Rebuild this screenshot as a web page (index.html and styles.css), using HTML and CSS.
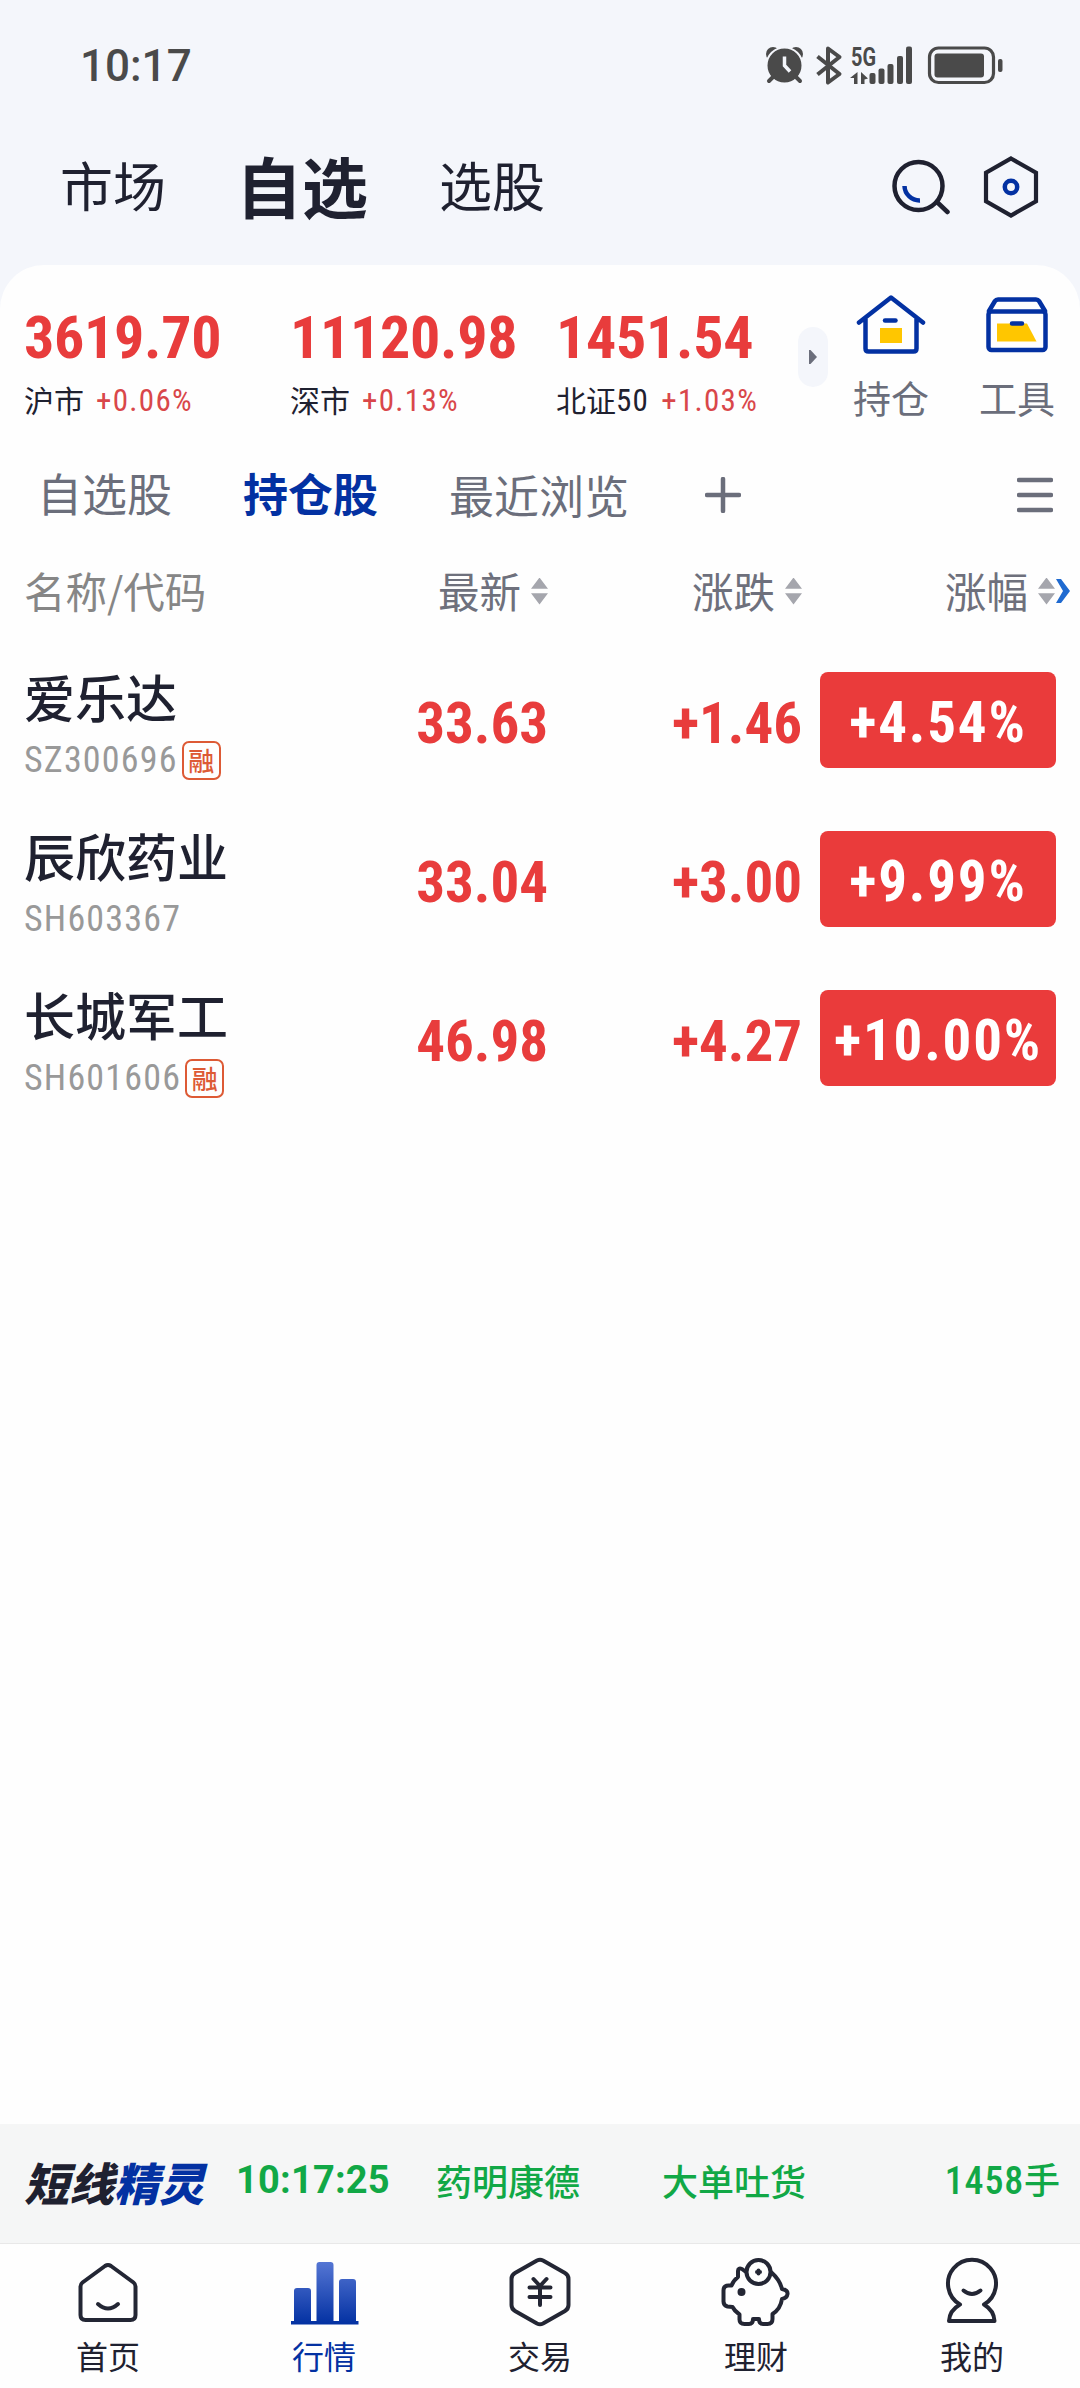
FILE: index.html
```html
<!DOCTYPE html>
<html lang="zh-CN">
<head>
    <meta charset="UTF-8">
    <meta name="viewport" content="width=device-width, initial-scale=1.0">
    <title>自选</title>
    <link rel="stylesheet" href="styles.css">
</head>
<body>
    <div class="status-bar">
        <span class="clock">10:17</span>
        <svg class="status-icons" width="240" height="48" viewBox="765 40 240 48">
            <!-- alarm -->
            <g stroke="#4a4a4a" fill="none" stroke-width="4" stroke-linecap="round">
                <circle cx="773" cy="53" r="7" fill="#4a4a4a" stroke="none"/>
                <circle cx="796" cy="53" r="7" fill="#4a4a4a" stroke="none"/>
                <circle cx="784.5" cy="64.500" r="18" fill="#4a4a4a" stroke="#f4f6fb" stroke-width="2"/>
                <path d="M773.500 75.500l-4.500 4.500M795.500 75.500l4.500 4.500"/>
                <path d="M784.5 55.500v9l5.500 6" stroke="#f4f6fb" stroke-width="3.500" stroke-linecap="butt"/>
            </g>
            <!-- bluetooth -->
            <path d="M817.500 55.500l22 17.500-11.500 8.500v-34l11.500 8.500-22 17.500" fill="none" stroke="#4a4a4a" stroke-width="4" stroke-linejoin="round"/>
            <!-- mobile data -->
            <text class="net" x="851" y="64.500" textLength="25" lengthAdjust="spacingAndGlyphs">5G</text>
            <g fill="#4a4a4a">
                <path d="M857.500 71v12h-3.500v-6h-4zM861 83v-12l7 6.500-3.500 1v4.500z"/>
                <rect x="869.500" y="72" width="6" height="11" rx="2"/>
                <rect x="878.500" y="67.500" width="6" height="15.500" rx="2"/>
                <rect x="887.500" y="63" width="6" height="20" rx="2"/>
                <rect x="897" y="55" width="6" height="28" rx="2"/>
                <rect x="906" y="45.500" width="6" height="37.500" rx="2"/>
                <rect x="934.500" y="52.500" width="49.500" height="24" rx="3"/>
                <rect x="998" y="58" width="4.500" height="13" rx="2"/>
            </g>
            <rect x="929.500" y="47" width="64" height="34.500" rx="9" fill="none" stroke="#4a4a4a" stroke-width="3.200"/>
        </svg>
    </div>

    <header class="header">
        <nav class="main-tabs">
            <a class="main-tab">市场</a>
            <a class="main-tab active">自选</a>
            <a class="main-tab">选股</a>
        </nav>
        <div class="header-icons">
            <svg width="60" height="64" viewBox="890 154 60 64" fill="none" stroke-width="4.500">
                <circle cx="918.500" cy="185" r="24" stroke="#1f2130"/>
                <path d="M937 201l10.500 10" stroke="#1f2130" stroke-linecap="round"/>
                <path d="M904.500 185a15 15 0 0 0 15.500 14.500" stroke="#0331a2"/>
            </svg>
            <svg width="56" height="64" viewBox="983 154 56 64" fill="none">
                <path d="M1011 157.500l25 14.200v28.600l-25 14.200-25-14.200v-28.600z" stroke="#1f2130" stroke-width="4.200"/>
                <circle cx="1011" cy="186" r="6.200" stroke="#0331a2" stroke-width="4.500"/>
            </svg>
        </div>
    </header>

    <main class="card">
        <section class="overview">
            <div class="indexes">
                <div class="index">
                    <div class="index-value num">3619.70</div>
                    <div class="index-label">沪市<span class="num">+0.06%</span></div>
                </div>
                <div class="index">
                    <div class="index-value num">11120.98</div>
                    <div class="index-label">深市<span class="num">+0.13%</span></div>
                </div>
                <div class="index">
                    <div class="index-value num">1451.54</div>
                    <div class="index-label">北证<b class="num">50</b><span class="num">+1.03%</span></div>
                </div>
            </div>
            <div class="more">
                <svg width="8" height="14" viewBox="0 0 8 14"><path d="M0 0h1.500L8 7 1.500 14H0z" fill="#6b6e7b"/></svg>
            </div>
            <a class="tool">
                <svg width="70" height="62" viewBox="856 293 70 62" fill="none" stroke="#0331a2" stroke-width="4.500" stroke-linecap="round" stroke-linejoin="round">
                    <path d="M859 321.500l32-25 32 25M865.500 318v29.500q0 3 3 3h45q3 0 3-3v-29.500"/>
                    <path d="M885 319.500h10.500"/>
                    <rect x="880" y="327" width="22" height="15" fill="#ffc600" stroke="none"/>
                </svg>
                <span>持仓</span>
            </a>
            <a class="tool">
                <svg width="70" height="62" viewBox="982 293 70 62" fill="none" stroke="#0331a2" stroke-width="4.500" stroke-linecap="round" stroke-linejoin="round">
                    <path d="M997 322.500h30l9.500 18h-39.500z" fill="#ffc600" stroke="none"/>
                    <rect x="988.500" y="310.500" width="57" height="38.500" rx="3"/>
                    <path d="M989 310l6-10q1-1.500 3-1.500h38q2 0 3 1.500l6 10M1012 322.500h10"/>
                </svg>
                <span>工具</span>
            </a>
        </section>

        <nav class="group-tabs">
            <a class="group-tab">自选股</a>
            <a class="group-tab active">持仓股</a>
            <a class="group-tab low">最近浏览</a>
            <svg class="add" width="36" height="36" viewBox="0 0 36 36"><path d="M18 2v32M2 18h32" stroke="#6b6e7b" stroke-width="4.500" stroke-linecap="round"/></svg>
            <svg class="menu" width="36" height="36" viewBox="0 0 36 36"><path d="M2 3h32M2 18h32M2 33h32" stroke="#6b6e7b" stroke-width="4.500" stroke-linecap="round"/></svg>
        </nav>

        <div class="row thead">
            <span class="col-name">名称/代码</span>
            <span class="col-price">最新<i class="sort"></i></span>
            <span class="col-change">涨跌<i class="sort"></i></span>
            <span class="col-pct">涨幅<i class="sort"></i><svg width="16" height="26" viewBox="0 0 16 26"><path d="M1 1h5l9 12-9 12h-5l7-12z" fill="#1f6ad0"/></svg></span>
        </div>

        <div class="row stock">
            <div class="col-name">
                <div class="name">爱乐达</div>
                <div class="code"><span class="num">SZ300696</span><span class="badge">融</span></div>
            </div>
            <span class="col-price num">33.63</span>
            <span class="col-change num">+1.46</span>
            <span class="pct"><span class="num">+4.54%</span></span>
        </div>
        <div class="row stock">
            <div class="col-name">
                <div class="name">辰欣药业</div>
                <div class="code"><span class="num">SH603367</span></div>
            </div>
            <span class="col-price num">33.04</span>
            <span class="col-change num">+3.00</span>
            <span class="pct"><span class="num">+9.99%</span></span>
        </div>
        <div class="row stock">
            <div class="col-name">
                <div class="name">长城军工</div>
                <div class="code"><span class="num">SH601606</span><span class="badge">融</span></div>
            </div>
            <span class="col-price num">46.98</span>
            <span class="col-change num">+4.27</span>
            <span class="pct"><span class="num">+10.00%</span></span>
        </div>
    </main>

    <div class="ticker">
        <span class="ticker-logo">短线<em>精灵</em></span>
        <span class="ticker-time num">10:17:25</span>
        <span class="ticker-stock">药明康德</span>
        <span class="ticker-event">大单吐货</span>
        <span class="ticker-amount"><span class="num">1458</span>手</span>
    </div>

    <nav class="tabbar">
        <a class="tabbar-item">
            <svg width="72" height="72" viewBox="73 2256 72 72">
                <path d="M106 2266q3-2 6 0l22.500 16.500q2 1.500 2 4v28.500q0 5-5 5h-45q-5 0-5-5v-28.500q0-2.500 2-4z"/>
                <path d="M99 2304q10 9 20 0"/>
            </svg>
            <span>首页</span>
        </a>
        <a class="tabbar-item active">
            <svg width="72" height="72" viewBox="288 2256 72 72">
                <defs>
                    <linearGradient id="bars" gradientUnits="userSpaceOnUse" x1="0" y1="2262" x2="0" y2="2324">
                        <stop offset="0" stop-color="#5576d4"/>
                        <stop offset="1" stop-color="#0331a2"/>
                    </linearGradient>
                </defs>
                <path class="solid" fill="url(#bars)" d="M294 2321v-30q0-3 3-3h11q3 0 3 3v30h5.500v-56q0-3 3-3h11q3 0 3 3v56h5.500v-39q0-3 3-3h11q3 0 3 3v39h2.500v3.500h-67.500v-3.500z"/>
            </svg>
            <span>行情</span>
        </a>
        <a class="tabbar-item">
            <svg width="72" height="72" viewBox="504 2256 72 72">
                <path d="M537 2260.500q3-1.500 6 0l22 12.500q3.500 2 3.500 6v26q0 4-3.500 6l-22 12.500q-3 1.500-6 0l-22-12.500q-3.500-2-3.500-6v-26q0-4 3.500-6z"/>
                <path d="M533.500 2279l6.500 7 6.500-7M540 2287v18M529.500 2287.500h21M529.500 2297h21"/>
            </svg>
            <span>交易</span>
        </a>
        <a class="tabbar-item">
            <svg width="72" height="72" viewBox="720 2256 72 72">
                <circle cx="758.500" cy="2272" r="12"/>
                <path d="M758.500 2270.500v3M757 2272h3"/>
                <circle cx="741.500" cy="2292" r="2" fill="#232634"/>
                <path d="M746 2272l-4-3q-4-1.500-4 2v6q-5 4-6.500 8.500h-3q-5 0-5 5v11q0 4 4 5l5 .5q2 4 7 7.500v5q0 4.500 5 4.500h4.500q4 0 4-5h6q0 5 4 5h4.500q5 0 5-5v-5q8-5 9.500-15 5-1 5.500-5t-5.500-5q-2-9-11-17"/>
            </svg>
            <span>理财</span>
        </a>
        <a class="tabbar-item">
            <svg width="72" height="72" viewBox="935 2256 72 72">
                <path d="M959 2304.500a24 24 0 1 1 24 0q10 6 10.500 16.500h-45.500q.5-10.500 11-16.500"/>
                <path d="M962.500 2290.500q8.500 7 17 0"/>
            </svg>
            <span>我的</span>
        </a>
    </nav>
</body>
</html>
```
FILE: styles.css
```css
* {
    box-sizing: border-box;
}
body {
    margin: 0;
    width: 1080px;
    height: 2388px;
    display: flex;
    flex-direction: column;
    overflow: hidden;
    background: #f4f6fb;
    color: #1f2130;
    font-family: "Noto Sans CJK SC", sans-serif;
    line-height: 1;
}
svg {
    display: block;
    flex: none;
}
.num {
    font-family: Roboto, "Noto Sans CJK SC", sans-serif;
    font-stretch: 75%;
    white-space: nowrap;
}

/* status bar */
.status-bar {
    height: 130px;
    padding: 0 75px 0 80px;
    display: flex;
    align-items: center;
    justify-content: space-between;
    color: #4a4a4a;
}
.clock {
    padding-top: 2px;
    font: 500 44px/1 Roboto, sans-serif;
}
.net {
    font: 700 25px Roboto, sans-serif;
    fill: #4a4a4a;
}

/* top header */
.header {
    height: 135px;
    padding: 0 41px 22px 60px;
    display: flex;
    align-items: center;
    justify-content: space-between;
}
.main-tabs {
    display: flex;
    align-items: center;
    padding-bottom: 5px;
}
.main-tab {
    width: 180px;
    font-size: 53px;
}
.main-tab.active {
    width: 203px;
    margin-left: -4px;
    font-size: 66px;
    font-weight: 700;
}
.header-icons {
    display: flex;
    gap: 33px;
}

/* white card */
.card {
    flex: 1;
    background: #fefefe;
    border-radius: 44px 44px 0 0;
}
.overview {
    height: 172px;
    padding: 29px 0 0 24px;
    display: flex;
}
.indexes {
    display: flex;
    flex: none;
    width: 774px;
}
.index {
    flex: none;
    width: 266px;
}
.index:last-child {
    width: 242px;
}
.index-value {
    margin-top: 14px;
    font-size: 60px;
    font-weight: 700;
    line-height: 60px;
    letter-spacing: -0.3px;
    color: #e83c3c;
}
.index-label {
    margin-top: 13px;
    display: flex;
    align-items: center;
    font-size: 30px;
    line-height: 32px;
    white-space: nowrap;
}
.index-label .num {
    padding-top: 4px;
    font-size: 31px;
    letter-spacing: 1.3px;
}
.index-label b {
    font-weight: 400;
}
.index-label span {
    margin-left: 12px;
    color: #d9474a;
}
.more {
    flex: none;
    width: 30px;
    height: 60px;
    margin: 33px 12px 0 0;
    display: flex;
    align-items: center;
    justify-content: center;
    border-radius: 15px;
    background: #f4f6fb;
}
.tool {
    flex: none;
    width: 102px;
    margin-right: 24px;
    display: flex;
    flex-direction: column;
    align-items: center;
    font-size: 38px;
    color: #6b6e7b;
}
.tool:last-child {
    margin-right: 0;
}
.tool span {
    margin-top: 22px;
}

/* watchlist groups */
.group-tabs {
    height: 116px;
    padding: 0 27px 0 37px;
    display: flex;
    align-items: center;
    font-size: 45px;
    color: #6b6e7b;
}
.group-tab {
    margin-right: 71px;
    padding-bottom: 6px;
}
.group-tab.active {
    font-weight: 700;
    color: #0331a2;
}
.group-tab.low {
    padding-bottom: 2px;
}
.add {
    margin-left: 5px;
}
.menu {
    margin-left: auto;
}

/* quotes table */
.row {
    display: grid;
    grid-template-columns: 363px 161px 254px 1fr;
    padding: 0 24px;
}
.thead {
    height: 82px;
    padding-bottom: 6px;
    align-items: center;
    font-size: 41.5px;
    color: #6e707c;
}
.thead .col-name {
    color: #868686;
}
.thead .col-price,
.thead .col-change,
.thead .col-pct {
    display: flex;
    align-items: center;
    justify-content: flex-end;
}
.thead .col-pct {
    margin-right: -15px;
}
.sort {
    width: 17px;
    height: 27px;
    margin-left: 10px;
    background: #a5a6ad;
    clip-path: polygon(50% 0, 100% 42%, 0 42%, 0 58%, 100% 58%, 50% 100%, 0 58%, 0 42%);
}
.stock {
    height: 159px;
    padding-top: 37px;
    color: #e83c3c;
}
.name {
    margin-top: -1px;
    font-size: 51px;
    line-height: 51px;
    color: #1f2130;
    font-weight: 500;
}
.code {
    height: 40px;
    margin-top: 18px;
    display: flex;
    align-items: center;
    font-size: 36px;
    color: #999;
}
.code .num {
    letter-spacing: 1.2px;
}
.badge {
    width: 39px;
    height: 39px;
    margin-left: 4px;
    padding-bottom: 1px;
    display: flex;
    align-items: center;
    justify-content: center;
    border: 2px solid #dd5a35;
    border-radius: 7px;
    font-size: 26px;
    font-weight: 500;
    color: #dd5a35;
}
.stock > .num {
    padding-top: 4px;
    font-size: 57px;
    font-weight: 700;
    line-height: 96px;
    text-align: right;
}
.pct {
    width: 236px;
    height: 96px;
    margin-left: 18px;
    padding-top: 5px;
    display: flex;
    align-items: center;
    justify-content: center;
    border-radius: 8px;
    background: #ea3b3b;
    color: #fff;
    font-size: 57px;
    font-weight: 700;
}
.pct .num {
    letter-spacing: 1.8px;
}

/* short-term alerts */
.ticker {
    height: 120px;
    padding: 0 20px 8px 24px;
    display: flex;
    align-items: center;
    background: #f5f6f6;
    border-bottom: 1px solid #e8e8e8;
    font-size: 36px;
    font-weight: 500;
    color: #11a846;
}
.ticker-logo {
    width: 212px;
    padding-top: 4px;
    font-size: 45px;
    font-weight: 900;
    font-style: italic;
    color: #1f2130;
}
.ticker-logo em {
    color: #0331a2;
}
.ticker-time {
    width: 200px;
    font-size: 38px;
    font-stretch: 100%;
    font-weight: 700;
    letter-spacing: 0.2px;
}
.ticker-stock {
    width: 226px;
}
.ticker-amount {
    margin-left: auto;
}
.ticker-amount .num {
    font-size: 38px;
    letter-spacing: 0.8px;
}

/* bottom navigation */
.tabbar {
    height: 144px;
    display: flex;
    background: #fefefe;
}
.tabbar-item {
    flex: 1;
    padding-top: 12px;
    display: flex;
    flex-direction: column;
    align-items: center;
    font-size: 32px;
}
.tabbar-item svg {
    fill: none;
    stroke: #232634;
    stroke-width: 4;
    stroke-linecap: round;
    stroke-linejoin: round;
}
.tabbar-item .solid {
    stroke: none;
}
.tabbar-item span {
    margin-top: 11px;
}
.tabbar-item.active {
    color: #0331a2;
}
```
